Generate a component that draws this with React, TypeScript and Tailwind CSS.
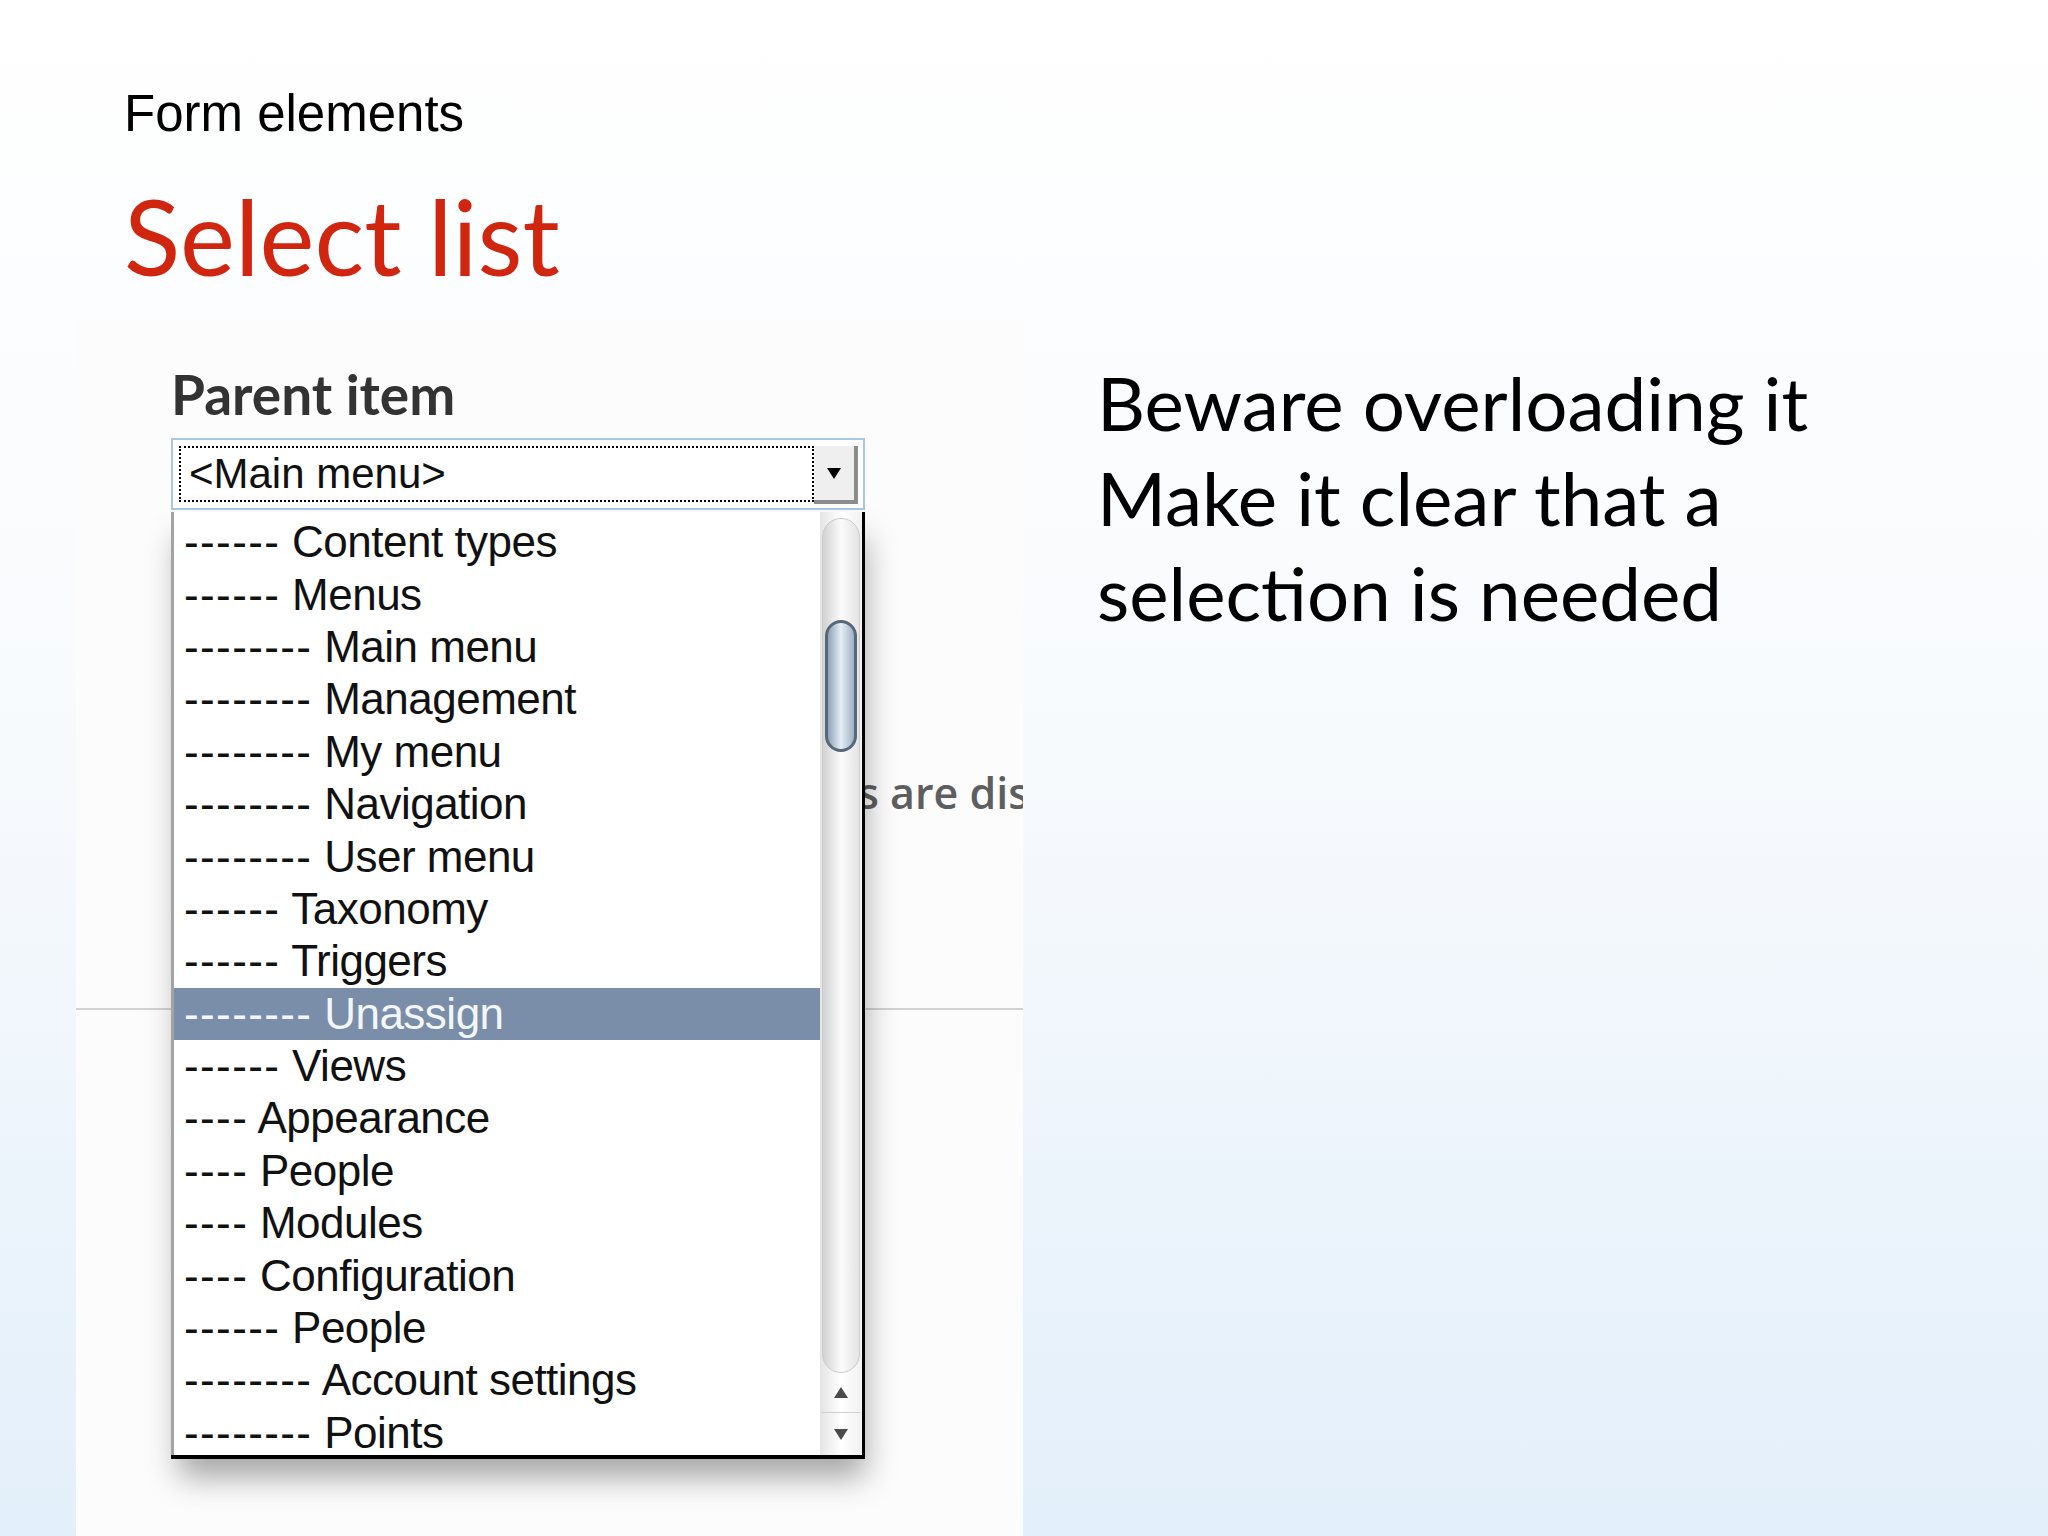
const options = [
  "------ Content types",
  "------ Menus",
  "-------- Main menu",
  "-------- Management",
  "-------- My menu",
  "-------- Navigation",
  "-------- User menu",
  "------ Taxonomy",
  "------ Triggers",
  "-------- Unassign",
  "------ Views",
  "---- Appearance",
  "---- People",
  "---- Modules",
  "---- Configuration",
  "------ People",
  "-------- Account settings",
  "-------- Points",
];

const selected = "-------- Unassign";

function Triangle({ dir, className }: { dir: "up" | "down"; className?: string }) {
  return (
    <svg width="14" height="11" viewBox="0 0 14 11" className={className}>
      {dir === "up" ? (
        <polygon points="7,0 14,11 0,11" fill="currentColor" />
      ) : (
        <polygon points="0,0 14,0 7,11" fill="currentColor" />
      )}
    </svg>
  );
}

function SelectBox() {
  return (
    <div className="ml-[95px] mt-[16px] flex h-[72px] w-[694px] items-start border-2 border-[#a9c6e6] bg-white py-[6px] pl-[6px] pr-[5px]">
      <div className="flex h-[56px] flex-1 items-center border-2 border-dotted border-black pl-[8px]">
        <span className="font-['Liberation_Sans',Arial,sans-serif] text-[42px] leading-none text-[#111]">
          &lt;Main menu&gt;
        </span>
      </div>
      <div className="flex h-[58px] w-[44px] items-center justify-center border-b-4 border-r-4 border-[#8c8c8c] bg-[#efefef] text-black">
        <Triangle dir="down" />
      </div>
    </div>
  );
}

function Scrollbar() {
  return (
    <div className="flex w-[42px] flex-col bg-gradient-to-r from-[#e4e4e4] via-white to-[#f1f1f1] px-[2px] pt-[6px]">
      <div className="flex flex-1 flex-col rounded-full border border-[#cccccc] bg-gradient-to-r from-[#d2d2d2] via-[#fbfbfb] to-[#e4e4e4]">
        <div className="h-[101px] shrink-0" />
        <div className="mx-[2px] h-[132px] shrink-0 rounded-full border-[3px] border-[#56687a] bg-gradient-to-r from-[#8fa2b6] via-[#e6eef7] to-[#9fb1c4]" />
      </div>
      <div className="flex h-[40px] items-center justify-center border-b border-[#cfcfcf] text-[#4a4a4a]">
        <Triangle dir="up" />
      </div>
      <div className="flex h-[42px] items-center justify-center text-[#4a4a4a]">
        <Triangle dir="down" />
      </div>
    </div>
  );
}

function OptionList() {
  return (
    <div className="absolute left-[95px] top-[192px] flex h-[947px] w-[694px] border-b-4 border-r-[3px] border-black bg-white shadow-[4px_22px_30px_-4px_rgba(0,0,0,0.35)]">
      <div className="flex-1 border-l-[3px] border-[#a3a3a3] pt-[4px]">
        {options.map((o, i) => {
          const on = o === selected;
          const cut = o.indexOf(" ");
          return (
            <div
              key={i}
              className={
                "flex h-[52.4px] items-center whitespace-pre pl-[10px] font-['Liberation_Sans',Arial,sans-serif] text-[44px] leading-none " +
                (on ? "bg-[#7a8ea9] text-[#f3f6fa]" : "text-[#111]")
              }
            >
              <span className="tracking-[1.4px]">{o.slice(0, cut)}</span>
              <span className="tracking-[-0.5px]">{o.slice(cut)}</span>
            </div>
          );
        })}
      </div>
      <Scrollbar />
    </div>
  );
}

export default function App() {
  return (
    <div className="relative h-[1536px] w-[2048px] overflow-hidden bg-gradient-to-b from-white via-[#f7fafd] to-[#e3effa]">
      <div className="pl-[124px] pt-[88px]">
        <div className="font-['Liberation_Sans',Arial,sans-serif] text-[51px] leading-none text-black">
          Form elements
        </div>
        <div className="mt-[45px] font-['Lato',sans-serif] text-[104px] leading-none text-[#d0260f]">
          Select list
        </div>
      </div>

      <div className="mt-[32px] flex">
        <div className="relative ml-[76px] h-[1216px] w-[947px] overflow-hidden bg-[#fcfcfd] pt-[47px]">
          <div className="ml-[95px] font-['Lato',sans-serif] text-[55px] font-bold leading-none text-[#333]">
            Parent item
          </div>
          <SelectBox />
          <div className="ml-[782px] mt-[261px] whitespace-nowrap font-['Open_Sans',sans-serif] text-[43px] font-semibold leading-none text-[#5e5e5e]">
            s are displayed in the menu
          </div>
          <div className="mt-[194px] h-[2px] w-full bg-[#d2d2d2]" />
          <OptionList />
        </div>

        <div className="ml-[74px] mt-[35px] font-['Lato',sans-serif] text-[74.5px] leading-[95px] text-black">
          <div>Beware overloading it</div>
          <div>Make it clear that a</div>
          <div>selection is needed</div>
        </div>
      </div>
    </div>
  );
}
